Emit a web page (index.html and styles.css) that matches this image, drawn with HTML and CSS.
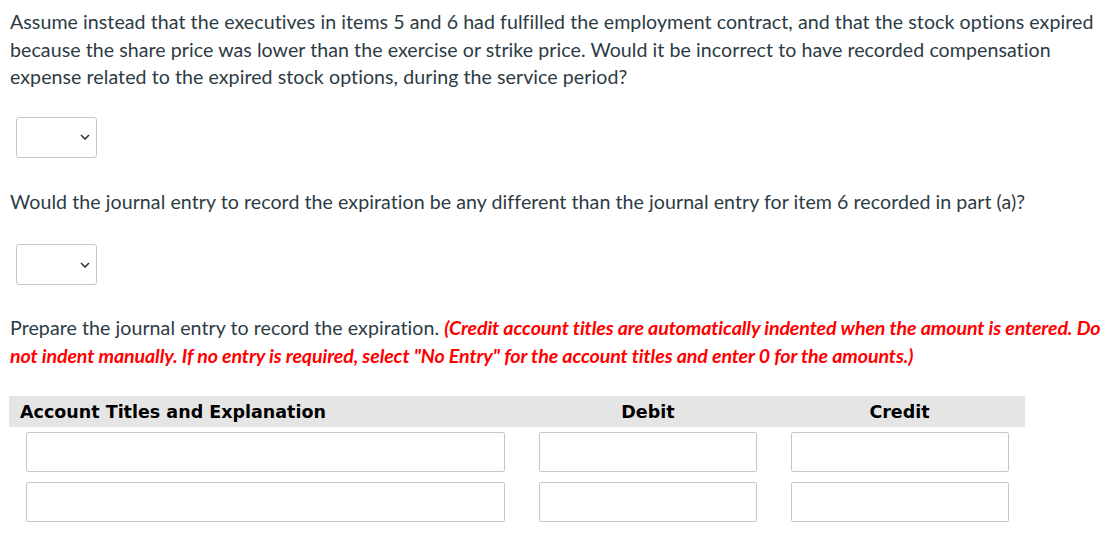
FILE: index.html
```
<!DOCTYPE html>
<html>
<head>
<meta charset="utf-8">
<link rel="stylesheet" href="styles.css">
</head>
<body>
<div class="page">
  <p class="q q1">Assume instead that the executives in items 5 and 6 had fulfilled the employment contract, and that the stock options expired because the share price was lower than the exercise or strike price. Would it be incorrect to have recorded compensation expense related to the expired stock options, during the service period?</p>
  <div class="sel sel1"><svg class="chev" width="10" height="6" viewBox="0 0 10 6"><path d="M1 1 L5 5 L9 1" fill="none" stroke="#333" stroke-width="1.6"/></svg></div>
  <p class="q q2">Would the journal entry to record the expiration be any different than the journal entry for item 6 recorded in part (a)?</p>
  <div class="sel sel2"><svg class="chev" width="10" height="6" viewBox="0 0 10 6"><path d="M1 1 L5 5 L9 1" fill="none" stroke="#333" stroke-width="1.6"/></svg></div>
  <p class="q q3">Prepare the journal entry to record the expiration. <span class="note">(Credit account titles are automatically indented when the amount is entered. Do not indent manually. If no entry is required, select "No Entry" for the account titles and enter 0 for the amounts.)</span></p>
  <div class="journal">
    <div class="jhead">
      <div class="hc hc-title">Account Titles and Explanation</div>
      <div class="hc hc-num">Debit</div>
      <div class="hc hc-num">Credit</div>
    </div>
    <div class="jrow">
      <div class="cell"><div class="box"></div></div>
      <div class="cell"><div class="box"></div></div>
      <div class="cell"><div class="box"></div></div>
    </div>
    <div class="jrow">
      <div class="cell"><div class="box"></div></div>
      <div class="cell"><div class="box"></div></div>
      <div class="cell"><div class="box"></div></div>
    </div>
  </div>
</div>
</body>
</html>
```
FILE: styles.css
```
html, body {
  margin: 0;
  padding: 0;
  background: #fff;
}
.page {
  padding: 8px 8px 0 8px;
  font-family: Lato, "Open Sans", sans-serif;
  font-size: 19.6px;
  letter-spacing: 0.06px;
  color: #2d3b45;
}
.q {
  margin: 0;
  line-height: 27.5px;
  padding-left: 2px;
}
.sel {
  height: 39px;
  border: 1px solid #c8c8c8;
  border-radius: 3px;
  margin-left: 8px;
  display: flex;
  align-items: center;
  justify-content: flex-end;
  padding-right: 6px;
  width: 73px;
}
.sel1 { margin-top: 26px; }
.q2 { margin-top: 30px; }
.sel2 { margin-top: 29px; }
.q3 { margin-top: 29px; }
.note {
  color: #f00;
  font-weight: bold;
  font-style: italic;
  letter-spacing: -0.1px;
}
.journal {
  margin-top: 27px;
  margin-left: 1px;
  width: 1016px;
}
.jhead {
  display: grid;
  grid-template-columns: 513px 252px 251px;
  background: #e5e5e5;
  height: 31px;
  align-items: center;
  font-family: "DejaVu Sans", Verdana, sans-serif;
  font-weight: bold;
  font-size: 17.5px;
  letter-spacing: 0;
  color: #000;
}
.hc-title { padding-left: 11px; }
.hc-num { text-align: center; }
.jrow {
  display: grid;
  grid-template-columns: 513px 252px 251px;
  margin-top: 5px;
}
.jrow + .jrow { margin-top: 10px; }
.cell { padding: 0 17px; }
.cell:last-child { padding-right: 16px; }
.box {
  height: 38px;
  border: 1px solid #c8c8c8;
  border-radius: 2px;
}
```
